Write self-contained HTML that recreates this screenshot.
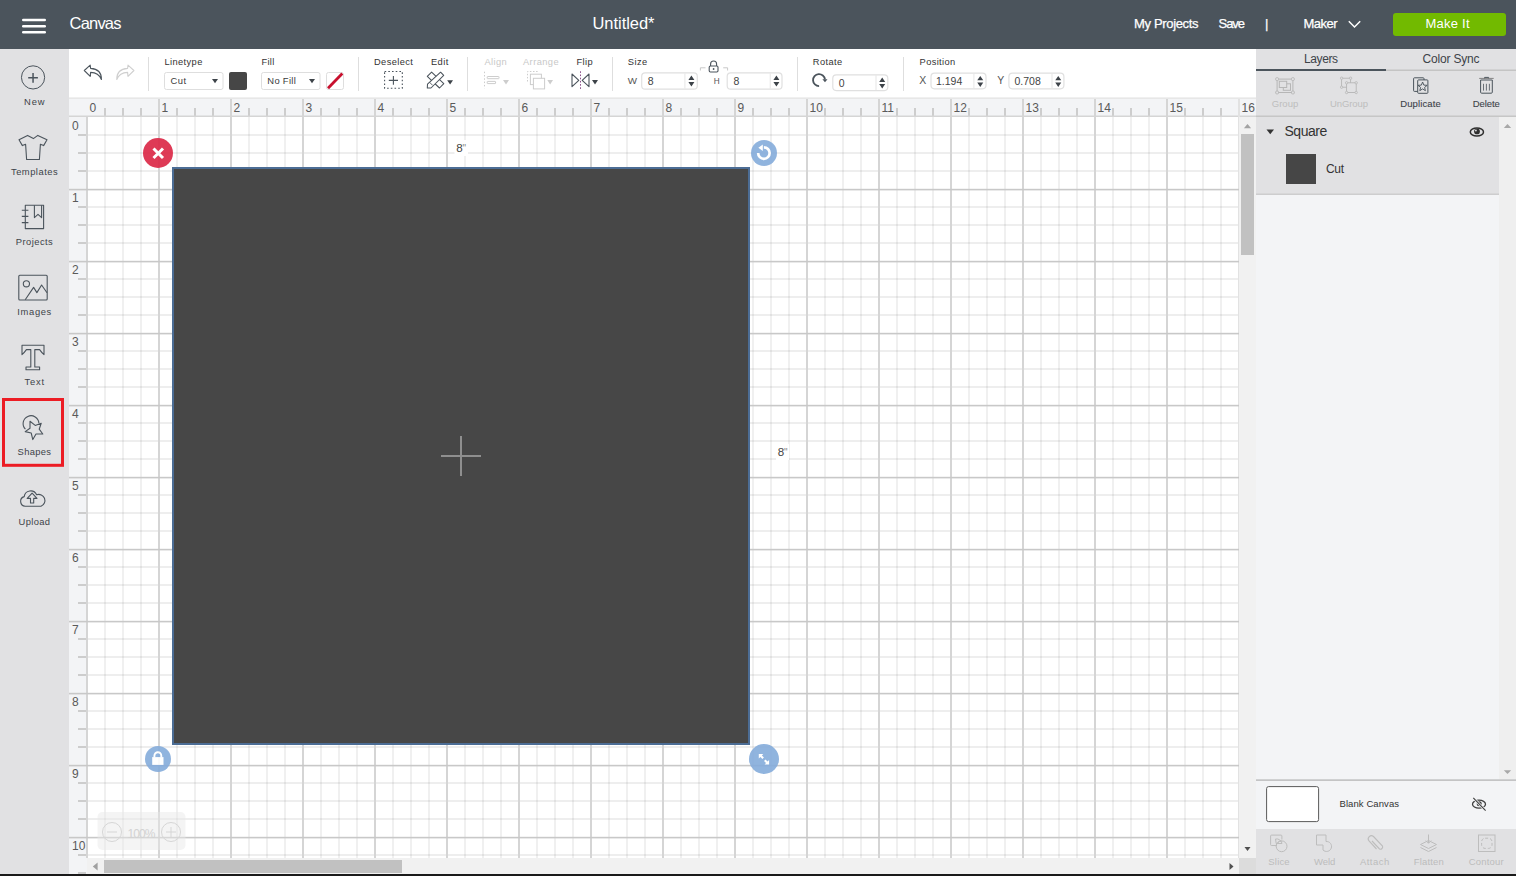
<!DOCTYPE html>
<html><head><meta charset="utf-8"><title>Cricut Design Space - Canvas</title>
<style>html,body{margin:0;padding:0;width:1516px;height:876px;overflow:hidden;background:#1a1a1a}svg{display:block}</style></head><body>
<svg width="1516" height="876" viewBox="0 0 1516 876" style="font-family:&quot;Liberation Sans&quot;,sans-serif">
<rect x="0" y="0" width="1516" height="876" fill="#1a1a1a"/>
<rect x="69" y="98" width="1187" height="776" fill="#ffffff"/>
<rect x="69" y="98" width="1187" height="19" fill="#f3f4f6"/>
<rect x="69" y="117" width="18" height="757" fill="#f3f4f6"/>
<rect x="104" y="117" width="2" height="741" fill="#000" fill-opacity="0.06"/>
<rect x="122" y="117" width="2" height="741" fill="#000" fill-opacity="0.06"/>
<rect x="140" y="117" width="2" height="741" fill="#000" fill-opacity="0.06"/>
<rect x="176" y="117" width="2" height="741" fill="#000" fill-opacity="0.06"/>
<rect x="194" y="117" width="2" height="741" fill="#000" fill-opacity="0.06"/>
<rect x="212" y="117" width="2" height="741" fill="#000" fill-opacity="0.06"/>
<rect x="248" y="117" width="2" height="741" fill="#000" fill-opacity="0.06"/>
<rect x="266" y="117" width="2" height="741" fill="#000" fill-opacity="0.06"/>
<rect x="284" y="117" width="2" height="741" fill="#000" fill-opacity="0.06"/>
<rect x="320" y="117" width="2" height="741" fill="#000" fill-opacity="0.06"/>
<rect x="338" y="117" width="2" height="741" fill="#000" fill-opacity="0.06"/>
<rect x="356" y="117" width="2" height="741" fill="#000" fill-opacity="0.06"/>
<rect x="392" y="117" width="2" height="741" fill="#000" fill-opacity="0.06"/>
<rect x="410" y="117" width="2" height="741" fill="#000" fill-opacity="0.06"/>
<rect x="428" y="117" width="2" height="741" fill="#000" fill-opacity="0.06"/>
<rect x="464" y="117" width="2" height="741" fill="#000" fill-opacity="0.06"/>
<rect x="482" y="117" width="2" height="741" fill="#000" fill-opacity="0.06"/>
<rect x="500" y="117" width="2" height="741" fill="#000" fill-opacity="0.06"/>
<rect x="536" y="117" width="2" height="741" fill="#000" fill-opacity="0.06"/>
<rect x="554" y="117" width="2" height="741" fill="#000" fill-opacity="0.06"/>
<rect x="572" y="117" width="2" height="741" fill="#000" fill-opacity="0.06"/>
<rect x="608" y="117" width="2" height="741" fill="#000" fill-opacity="0.06"/>
<rect x="626" y="117" width="2" height="741" fill="#000" fill-opacity="0.06"/>
<rect x="644" y="117" width="2" height="741" fill="#000" fill-opacity="0.06"/>
<rect x="680" y="117" width="2" height="741" fill="#000" fill-opacity="0.06"/>
<rect x="698" y="117" width="2" height="741" fill="#000" fill-opacity="0.06"/>
<rect x="716" y="117" width="2" height="741" fill="#000" fill-opacity="0.06"/>
<rect x="752" y="117" width="2" height="741" fill="#000" fill-opacity="0.06"/>
<rect x="770" y="117" width="2" height="741" fill="#000" fill-opacity="0.06"/>
<rect x="788" y="117" width="2" height="741" fill="#000" fill-opacity="0.06"/>
<rect x="824" y="117" width="2" height="741" fill="#000" fill-opacity="0.06"/>
<rect x="842" y="117" width="2" height="741" fill="#000" fill-opacity="0.06"/>
<rect x="860" y="117" width="2" height="741" fill="#000" fill-opacity="0.06"/>
<rect x="896" y="117" width="2" height="741" fill="#000" fill-opacity="0.06"/>
<rect x="914" y="117" width="2" height="741" fill="#000" fill-opacity="0.06"/>
<rect x="932" y="117" width="2" height="741" fill="#000" fill-opacity="0.06"/>
<rect x="968" y="117" width="2" height="741" fill="#000" fill-opacity="0.06"/>
<rect x="986" y="117" width="2" height="741" fill="#000" fill-opacity="0.06"/>
<rect x="1004" y="117" width="2" height="741" fill="#000" fill-opacity="0.06"/>
<rect x="1040" y="117" width="2" height="741" fill="#000" fill-opacity="0.06"/>
<rect x="1058" y="117" width="2" height="741" fill="#000" fill-opacity="0.06"/>
<rect x="1076" y="117" width="2" height="741" fill="#000" fill-opacity="0.06"/>
<rect x="1112" y="117" width="2" height="741" fill="#000" fill-opacity="0.06"/>
<rect x="1130" y="117" width="2" height="741" fill="#000" fill-opacity="0.06"/>
<rect x="1148" y="117" width="2" height="741" fill="#000" fill-opacity="0.06"/>
<rect x="1184" y="117" width="2" height="741" fill="#000" fill-opacity="0.06"/>
<rect x="1202" y="117" width="2" height="741" fill="#000" fill-opacity="0.06"/>
<rect x="1220" y="117" width="2" height="741" fill="#000" fill-opacity="0.06"/>
<rect x="87" y="134" width="1152" height="2" fill="#000" fill-opacity="0.065"/>
<rect x="87" y="152" width="1152" height="2" fill="#000" fill-opacity="0.065"/>
<rect x="87" y="170" width="1152" height="2" fill="#000" fill-opacity="0.065"/>
<rect x="87" y="206" width="1152" height="2" fill="#000" fill-opacity="0.065"/>
<rect x="87" y="224" width="1152" height="2" fill="#000" fill-opacity="0.065"/>
<rect x="87" y="242" width="1152" height="2" fill="#000" fill-opacity="0.065"/>
<rect x="87" y="278" width="1152" height="2" fill="#000" fill-opacity="0.065"/>
<rect x="87" y="296" width="1152" height="2" fill="#000" fill-opacity="0.065"/>
<rect x="87" y="314" width="1152" height="2" fill="#000" fill-opacity="0.065"/>
<rect x="87" y="350" width="1152" height="2" fill="#000" fill-opacity="0.065"/>
<rect x="87" y="368" width="1152" height="2" fill="#000" fill-opacity="0.065"/>
<rect x="87" y="386" width="1152" height="2" fill="#000" fill-opacity="0.065"/>
<rect x="87" y="422" width="1152" height="2" fill="#000" fill-opacity="0.065"/>
<rect x="87" y="440" width="1152" height="2" fill="#000" fill-opacity="0.065"/>
<rect x="87" y="458" width="1152" height="2" fill="#000" fill-opacity="0.065"/>
<rect x="87" y="494" width="1152" height="2" fill="#000" fill-opacity="0.065"/>
<rect x="87" y="512" width="1152" height="2" fill="#000" fill-opacity="0.065"/>
<rect x="87" y="530" width="1152" height="2" fill="#000" fill-opacity="0.065"/>
<rect x="87" y="566" width="1152" height="2" fill="#000" fill-opacity="0.065"/>
<rect x="87" y="584" width="1152" height="2" fill="#000" fill-opacity="0.065"/>
<rect x="87" y="602" width="1152" height="2" fill="#000" fill-opacity="0.065"/>
<rect x="87" y="638" width="1152" height="2" fill="#000" fill-opacity="0.065"/>
<rect x="87" y="656" width="1152" height="2" fill="#000" fill-opacity="0.065"/>
<rect x="87" y="674" width="1152" height="2" fill="#000" fill-opacity="0.065"/>
<rect x="87" y="710" width="1152" height="2" fill="#000" fill-opacity="0.065"/>
<rect x="87" y="728" width="1152" height="2" fill="#000" fill-opacity="0.065"/>
<rect x="87" y="746" width="1152" height="2" fill="#000" fill-opacity="0.065"/>
<rect x="87" y="782" width="1152" height="2" fill="#000" fill-opacity="0.065"/>
<rect x="87" y="800" width="1152" height="2" fill="#000" fill-opacity="0.065"/>
<rect x="87" y="818" width="1152" height="2" fill="#000" fill-opacity="0.065"/>
<rect x="87" y="854" width="1152" height="2" fill="#000" fill-opacity="0.065"/>
<rect x="104" y="108" width="2" height="8" fill="#cdcdcd"/>
<rect x="122" y="108" width="2" height="8" fill="#cdcdcd"/>
<rect x="140" y="108" width="2" height="8" fill="#cdcdcd"/>
<rect x="176" y="108" width="2" height="8" fill="#cdcdcd"/>
<rect x="194" y="108" width="2" height="8" fill="#cdcdcd"/>
<rect x="212" y="108" width="2" height="8" fill="#cdcdcd"/>
<rect x="248" y="108" width="2" height="8" fill="#cdcdcd"/>
<rect x="266" y="108" width="2" height="8" fill="#cdcdcd"/>
<rect x="284" y="108" width="2" height="8" fill="#cdcdcd"/>
<rect x="320" y="108" width="2" height="8" fill="#cdcdcd"/>
<rect x="338" y="108" width="2" height="8" fill="#cdcdcd"/>
<rect x="356" y="108" width="2" height="8" fill="#cdcdcd"/>
<rect x="392" y="108" width="2" height="8" fill="#cdcdcd"/>
<rect x="410" y="108" width="2" height="8" fill="#cdcdcd"/>
<rect x="428" y="108" width="2" height="8" fill="#cdcdcd"/>
<rect x="464" y="108" width="2" height="8" fill="#cdcdcd"/>
<rect x="482" y="108" width="2" height="8" fill="#cdcdcd"/>
<rect x="500" y="108" width="2" height="8" fill="#cdcdcd"/>
<rect x="536" y="108" width="2" height="8" fill="#cdcdcd"/>
<rect x="554" y="108" width="2" height="8" fill="#cdcdcd"/>
<rect x="572" y="108" width="2" height="8" fill="#cdcdcd"/>
<rect x="608" y="108" width="2" height="8" fill="#cdcdcd"/>
<rect x="626" y="108" width="2" height="8" fill="#cdcdcd"/>
<rect x="644" y="108" width="2" height="8" fill="#cdcdcd"/>
<rect x="680" y="108" width="2" height="8" fill="#cdcdcd"/>
<rect x="698" y="108" width="2" height="8" fill="#cdcdcd"/>
<rect x="716" y="108" width="2" height="8" fill="#cdcdcd"/>
<rect x="752" y="108" width="2" height="8" fill="#cdcdcd"/>
<rect x="770" y="108" width="2" height="8" fill="#cdcdcd"/>
<rect x="788" y="108" width="2" height="8" fill="#cdcdcd"/>
<rect x="824" y="108" width="2" height="8" fill="#cdcdcd"/>
<rect x="842" y="108" width="2" height="8" fill="#cdcdcd"/>
<rect x="860" y="108" width="2" height="8" fill="#cdcdcd"/>
<rect x="896" y="108" width="2" height="8" fill="#cdcdcd"/>
<rect x="914" y="108" width="2" height="8" fill="#cdcdcd"/>
<rect x="932" y="108" width="2" height="8" fill="#cdcdcd"/>
<rect x="968" y="108" width="2" height="8" fill="#cdcdcd"/>
<rect x="986" y="108" width="2" height="8" fill="#cdcdcd"/>
<rect x="1004" y="108" width="2" height="8" fill="#cdcdcd"/>
<rect x="1040" y="108" width="2" height="8" fill="#cdcdcd"/>
<rect x="1058" y="108" width="2" height="8" fill="#cdcdcd"/>
<rect x="1076" y="108" width="2" height="8" fill="#cdcdcd"/>
<rect x="1112" y="108" width="2" height="8" fill="#cdcdcd"/>
<rect x="1130" y="108" width="2" height="8" fill="#cdcdcd"/>
<rect x="1148" y="108" width="2" height="8" fill="#cdcdcd"/>
<rect x="1184" y="108" width="2" height="8" fill="#cdcdcd"/>
<rect x="1202" y="108" width="2" height="8" fill="#cdcdcd"/>
<rect x="1220" y="108" width="2" height="8" fill="#cdcdcd"/>
<rect x="78" y="134" width="8" height="2" fill="#cdcdcd"/>
<rect x="78" y="152" width="8" height="2" fill="#cdcdcd"/>
<rect x="78" y="170" width="8" height="2" fill="#cdcdcd"/>
<rect x="78" y="206" width="8" height="2" fill="#cdcdcd"/>
<rect x="78" y="224" width="8" height="2" fill="#cdcdcd"/>
<rect x="78" y="242" width="8" height="2" fill="#cdcdcd"/>
<rect x="78" y="278" width="8" height="2" fill="#cdcdcd"/>
<rect x="78" y="296" width="8" height="2" fill="#cdcdcd"/>
<rect x="78" y="314" width="8" height="2" fill="#cdcdcd"/>
<rect x="78" y="350" width="8" height="2" fill="#cdcdcd"/>
<rect x="78" y="368" width="8" height="2" fill="#cdcdcd"/>
<rect x="78" y="386" width="8" height="2" fill="#cdcdcd"/>
<rect x="78" y="422" width="8" height="2" fill="#cdcdcd"/>
<rect x="78" y="440" width="8" height="2" fill="#cdcdcd"/>
<rect x="78" y="458" width="8" height="2" fill="#cdcdcd"/>
<rect x="78" y="494" width="8" height="2" fill="#cdcdcd"/>
<rect x="78" y="512" width="8" height="2" fill="#cdcdcd"/>
<rect x="78" y="530" width="8" height="2" fill="#cdcdcd"/>
<rect x="78" y="566" width="8" height="2" fill="#cdcdcd"/>
<rect x="78" y="584" width="8" height="2" fill="#cdcdcd"/>
<rect x="78" y="602" width="8" height="2" fill="#cdcdcd"/>
<rect x="78" y="638" width="8" height="2" fill="#cdcdcd"/>
<rect x="78" y="656" width="8" height="2" fill="#cdcdcd"/>
<rect x="78" y="674" width="8" height="2" fill="#cdcdcd"/>
<rect x="78" y="710" width="8" height="2" fill="#cdcdcd"/>
<rect x="78" y="728" width="8" height="2" fill="#cdcdcd"/>
<rect x="78" y="746" width="8" height="2" fill="#cdcdcd"/>
<rect x="78" y="782" width="8" height="2" fill="#cdcdcd"/>
<rect x="78" y="800" width="8" height="2" fill="#cdcdcd"/>
<rect x="78" y="818" width="8" height="2" fill="#cdcdcd"/>
<rect x="78" y="854" width="8" height="2" fill="#cdcdcd"/>
<rect x="78" y="872" width="8" height="2" fill="#cdcdcd"/>
<rect x="69" y="115.5" width="1187" height="1.5" fill="#d5d5d5"/>
<rect x="86" y="117" width="2" height="741" fill="#d5d5d5"/>
<rect x="158" y="99" width="2" height="759" fill="#d5d5d5"/>
<rect x="230" y="99" width="2" height="759" fill="#d5d5d5"/>
<rect x="302" y="99" width="2" height="759" fill="#d5d5d5"/>
<rect x="374" y="99" width="2" height="759" fill="#d5d5d5"/>
<rect x="446" y="99" width="2" height="759" fill="#d5d5d5"/>
<rect x="518" y="99" width="2" height="759" fill="#d5d5d5"/>
<rect x="590" y="99" width="2" height="759" fill="#d5d5d5"/>
<rect x="662" y="99" width="2" height="759" fill="#d5d5d5"/>
<rect x="734" y="99" width="2" height="759" fill="#d5d5d5"/>
<rect x="806" y="99" width="2" height="759" fill="#d5d5d5"/>
<rect x="878" y="99" width="2" height="759" fill="#d5d5d5"/>
<rect x="950" y="99" width="2" height="759" fill="#d5d5d5"/>
<rect x="1022" y="99" width="2" height="759" fill="#d5d5d5"/>
<rect x="1094" y="99" width="2" height="759" fill="#d5d5d5"/>
<rect x="1166" y="99" width="2" height="759" fill="#d5d5d5"/>
<rect x="1238" y="99" width="2" height="759" fill="#e2e2e2"/>
<rect x="69" y="188.8" width="1170" height="1.6" fill="#c8c8c8"/>
<rect x="69" y="260.8" width="1170" height="1.6" fill="#c8c8c8"/>
<rect x="69" y="332.8" width="1170" height="1.6" fill="#c8c8c8"/>
<rect x="69" y="404.8" width="1170" height="1.6" fill="#c8c8c8"/>
<rect x="69" y="476.8" width="1170" height="1.6" fill="#c8c8c8"/>
<rect x="69" y="548.8" width="1170" height="1.6" fill="#c8c8c8"/>
<rect x="69" y="620.8" width="1170" height="1.6" fill="#c8c8c8"/>
<rect x="69" y="692.8" width="1170" height="1.6" fill="#c8c8c8"/>
<rect x="69" y="764.8" width="1170" height="1.6" fill="#c8c8c8"/>
<rect x="69" y="836.8" width="1170" height="1.6" fill="#c8c8c8"/>
<text x="89.5" y="112" font-size="12" fill="#5a5a5a" text-anchor="start" >0</text>
<text x="161.5" y="112" font-size="12" fill="#5a5a5a" text-anchor="start" >1</text>
<text x="233.5" y="112" font-size="12" fill="#5a5a5a" text-anchor="start" >2</text>
<text x="305.5" y="112" font-size="12" fill="#5a5a5a" text-anchor="start" >3</text>
<text x="377.5" y="112" font-size="12" fill="#5a5a5a" text-anchor="start" >4</text>
<text x="449.5" y="112" font-size="12" fill="#5a5a5a" text-anchor="start" >5</text>
<text x="521.5" y="112" font-size="12" fill="#5a5a5a" text-anchor="start" >6</text>
<text x="593.5" y="112" font-size="12" fill="#5a5a5a" text-anchor="start" >7</text>
<text x="665.5" y="112" font-size="12" fill="#5a5a5a" text-anchor="start" >8</text>
<text x="737.5" y="112" font-size="12" fill="#5a5a5a" text-anchor="start" >9</text>
<text x="809.5" y="112" font-size="12" fill="#5a5a5a" text-anchor="start" >10</text>
<text x="881.5" y="112" font-size="12" fill="#5a5a5a" text-anchor="start" >11</text>
<text x="953.5" y="112" font-size="12" fill="#5a5a5a" text-anchor="start" >12</text>
<text x="1025.5" y="112" font-size="12" fill="#5a5a5a" text-anchor="start" >13</text>
<text x="1097.5" y="112" font-size="12" fill="#5a5a5a" text-anchor="start" >14</text>
<text x="1169.5" y="112" font-size="12" fill="#5a5a5a" text-anchor="start" >15</text>
<text x="1241.5" y="112" font-size="12" fill="#5a5a5a" text-anchor="start" >16</text>
<text x="72" y="129.8" font-size="12" fill="#5a5a5a" text-anchor="start" >0</text>
<text x="72" y="201.8" font-size="12" fill="#5a5a5a" text-anchor="start" >1</text>
<text x="72" y="273.8" font-size="12" fill="#5a5a5a" text-anchor="start" >2</text>
<text x="72" y="345.8" font-size="12" fill="#5a5a5a" text-anchor="start" >3</text>
<text x="72" y="417.8" font-size="12" fill="#5a5a5a" text-anchor="start" >4</text>
<text x="72" y="489.8" font-size="12" fill="#5a5a5a" text-anchor="start" >5</text>
<text x="72" y="561.8" font-size="12" fill="#5a5a5a" text-anchor="start" >6</text>
<text x="72" y="633.8" font-size="12" fill="#5a5a5a" text-anchor="start" >7</text>
<text x="72" y="705.8" font-size="12" fill="#5a5a5a" text-anchor="start" >8</text>
<text x="72" y="777.8" font-size="12" fill="#5a5a5a" text-anchor="start" >9</text>
<text x="72" y="849.8" font-size="12" fill="#5a5a5a" text-anchor="start" >10</text>
<rect x="1239" y="117" width="17" height="741" fill="#f1f1f1"/>
<rect x="1241" y="134" width="13" height="121" fill="#c1c1c1"/>
<path d="M1243.9 128.2 L1247.5 124 L1251.1 128.2Z" fill="#a3a3a3"/>
<path d="M1244.5 847 L1247.5 851 L1250.5 847Z" fill="#505050"/>
<rect x="87" y="858" width="1152" height="16" fill="#f1f1f1"/>
<rect x="104" y="860" width="298" height="13" fill="#c1c1c1"/>
<path d="M97.6 862.6 L92.8 866.5 L97.6 870.4Z" fill="#a0a0a0"/>
<path d="M1229.5 863 L1233.5 866.5 L1229.5 870Z" fill="#505050"/>
<rect x="1239" y="858" width="17" height="16" fill="#dcdcdc"/>
<rect x="172" y="167" width="578" height="578" fill="#4c6d95"/>
<rect x="174" y="169" width="574" height="574" fill="#474747"/>
<rect x="460" y="436" width="2" height="40" fill="#8f8f8f"/>
<rect x="441" y="455" width="40" height="2" fill="#8f8f8f"/>
<rect x="454.5" y="140" width="13.5" height="16" fill="#fff"/>
<text x="456.2" y="152" font-size="11.6" fill="#444" text-anchor="start" >8</text>
<text x="462.6" y="152" font-size="10" fill="#888" text-anchor="start" >"</text>
<rect x="776" y="444" width="13" height="16" fill="#fff"/>
<text x="777.7" y="456" font-size="11.6" fill="#444" text-anchor="start" >8</text>
<text x="784.1" y="456" font-size="10" fill="#888" text-anchor="start" >"</text>
<g opacity="0.92">
<circle cx="158" cy="153" r="15" fill="#dc2a48"/>
<path d="M153.5 148.5 L163 158 M163 148.5 L153.5 158" stroke="#fff" stroke-width="3"/>
</g>
<g opacity="0.9">
<circle cx="764" cy="153" r="13" fill="#85acdb"/>
<path d="M758.15 153.05 A5.75 5.75 0 1 0 763.9 147.3" fill="none" stroke="#fff" stroke-width="2.7"/>
<path d="M762.8 144.6 L762.8 151 L758.4 147.8 Z" fill="#fff"/>
<circle cx="158" cy="759" r="13" fill="#85acdb"/>
<path d="M154.4 757.5 V755.7 A3.45 3.45 0 0 1 161.3 755.7 V757.5" fill="none" stroke="#fff" stroke-width="1.9"/>
<rect x="152.2" y="757.1" width="11.3" height="7.8" fill="#fff"/>
<circle cx="764" cy="759" r="15" fill="#85acdb"/>
<path d="M758.8 754 L763.3 754 L761.9 755.4 L763.9 757.4 L762.4 758.9 L760.4 756.9 L758.8 758.5 Z" fill="#fff"/>
<path d="M769.1 764.5 L764.6 764.5 L766 763.1 L764 761.1 L765.5 759.6 L767.5 761.6 L769.1 760 Z" fill="#fff"/>
</g>
<rect x="97.5" y="812" width="88" height="38" rx="5" fill="#e6e6e6" fill-opacity="0.45"/>
<circle cx="112" cy="832" r="9.5" fill="none" stroke="#d6d6d6" stroke-width="1"/>
<rect x="107" y="831.5" width="10" height="1" fill="#d6d6d6"/>
<circle cx="171" cy="832" r="9.5" fill="none" stroke="#d6d6d6" stroke-width="1"/>
<rect x="166" y="831.5" width="10" height="1" fill="#d6d6d6"/>
<rect x="170.5" y="827" width="1" height="10" fill="#d6d6d6"/>
<text x="127.5" y="837.5" font-size="12" fill="#d2d2d2" text-anchor="start" textLength="28" lengthAdjust="spacing" >100%</text>
<rect x="0" y="0" width="1516" height="49" fill="#4b545c"/>
<rect x="22" y="18.7" width="24" height="2.6" rx="1.3" fill="#fff"/>
<rect x="22" y="24.9" width="24" height="2.6" rx="1.3" fill="#fff"/>
<rect x="22" y="31.0" width="24" height="2.6" rx="1.3" fill="#fff"/>
<text x="69.5" y="28.75" font-size="16.5" fill="#fff" text-anchor="start" textLength="52" lengthAdjust="spacing" >Canvas</text>
<text x="592.5" y="29" font-size="16.5" fill="#fff" text-anchor="start" textLength="62" lengthAdjust="spacing" >Untitled*</text>
<text x="1134" y="28" font-size="13" fill="#fff" text-anchor="start" textLength="64.5" lengthAdjust="spacing" stroke="#fff" stroke-width="0.25">My Projects</text>
<text x="1218.5" y="28" font-size="13" fill="#fff" text-anchor="start" textLength="26.5" lengthAdjust="spacing" stroke="#fff" stroke-width="0.25">Save</text>
<text x="1265" y="28" font-size="13" fill="#fff" text-anchor="start" stroke="#fff" stroke-width="0.25">|</text>
<text x="1303.5" y="28" font-size="13" fill="#fff" text-anchor="start" textLength="34" lengthAdjust="spacing" stroke="#fff" stroke-width="0.25">Maker</text>
<path d="M1348.8 21.2 L1354.5 27 L1360.2 21.2" fill="none" stroke="#fff" stroke-width="1.5"/>
<rect x="1393" y="13" width="113" height="23" rx="3" fill="#72ba00"/>
<text x="1425.5" y="28" font-size="13" fill="#fff" text-anchor="start" textLength="44" lengthAdjust="spacing" >Make It</text>
<rect x="0" y="49" width="69" height="825" fill="#e1e1e3"/>
<circle cx="33.05" cy="77.4" r="11.6" fill="none" stroke="#4b545c" stroke-width="1"/>
<path d="M28.2 77.8 H37.9 M33.05 73 V82.7" fill="none" stroke="#4b545c" stroke-width="1.5"/>
<text x="34.3" y="105" font-size="9.4" fill="#3d4349" text-anchor="middle" textLength="20.6" lengthAdjust="spacing" >New</text>
<path d="M27.6 135.4 L33.4 138.6 L37.8 135.4 L47 139.8 L43.6 145.6 L40.4 144.2 L39.4 159.5 L26.6 159.5 L25.6 144.2 L22.4 145.6 L19 139.8 Z" fill="none" stroke="#4b545c" stroke-width="1.1" stroke-linejoin="round"/>
<text x="34.3" y="174.6" font-size="9.4" fill="#3d4349" text-anchor="middle" textLength="46.6" lengthAdjust="spacing" >Templates</text>
<rect x="25.3" y="205.2" width="18.3" height="23.4" fill="none" stroke="#4b545c" stroke-width="1.1" stroke-linejoin="round"/>
<path d="M21.8 210.2 H28.4 M21.8 216.4 H28.4 M21.8 222.6 H28.4" fill="none" stroke="#4b545c" stroke-width="1.1"/>
<path d="M34.4 205.2 V217.6 L38 214.4 L41.6 217.6 V205.2" fill="none" stroke="#4b545c" stroke-width="1.1" stroke-linejoin="round"/>
<text x="34.3" y="244.6" font-size="9.4" fill="#3d4349" text-anchor="middle" textLength="37" lengthAdjust="spacing" >Projects</text>
<rect x="18.8" y="275.2" width="28.4" height="24.8" rx="1" fill="none" stroke="#4b545c" stroke-width="1.1" stroke-linejoin="round"/>
<circle cx="26.4" cy="283.8" r="3.1" fill="none" stroke="#4b545c" stroke-width="1.1" stroke-linejoin="round"/>
<path d="M25.2 299.8 L33.6 287.4 L36.9 292.6 L41.6 285 L47 292.8" fill="none" stroke="#4b545c" stroke-width="1.1" stroke-linejoin="round"/>
<text x="34.3" y="314.6" font-size="9.4" fill="#3d4349" text-anchor="middle" textLength="34" lengthAdjust="spacing" >Images</text>
<path d="M22 345.2 H44 V354.6 Q42 353 39.6 349.6 H34.8 V367 H39.6 V369.8 H26 V367 H30.8 V349.6 H26.4 Q24 353 22 354.6 Z" fill="none" stroke="#4b545c" stroke-width="1.1" stroke-linejoin="round"/>
<text x="34.3" y="384.6" font-size="9.4" fill="#3d4349" text-anchor="middle" textLength="19.5" lengthAdjust="spacing" >Text</text>
<rect x="3.5" y="399.5" width="59" height="65.8" fill="none" stroke="#ec1c24" stroke-width="3"/>
<path d="M25.4 429.2 A7.9 7.9 0 1 1 38.9 423.3" fill="none" stroke="#4b545c" stroke-width="1.1" stroke-linejoin="round"/>
<path d="M30 421.3 L35.2 425.4 L41.2 423.3 L39.2 429.2 L42.8 434 L36 434 L32.8 439.6 L31.2 433 L25.2 431.6 L30 428.2 Z" fill="none" stroke="#4b545c" stroke-width="1.1" stroke-linejoin="round"/>
<text x="34.3" y="454.9" font-size="9.4" fill="#3d4349" text-anchor="middle" textLength="33.4" lengthAdjust="spacing" >Shapes</text>
<path d="M25.2 506.2 A4.9 4.9 0 0 1 24.2 496.6 A6.5 6.5 0 0 1 36.6 494.8 A5.6 5.6 0 0 1 41 506.2 Z" fill="none" stroke="#4b545c" stroke-width="1.1" stroke-linejoin="round"/>
<path d="M32.1 493.2 L37 498.4 H33.7 V503 H30.5 V498.4 H27.2 Z" fill="none" stroke="#4b545c" stroke-width="1.1" stroke-linejoin="round"/>
<text x="34.3" y="524.6" font-size="9.4" fill="#3d4349" text-anchor="middle" textLength="31.5" lengthAdjust="spacing" >Upload</text>
<rect x="69" y="49" width="1187" height="49" fill="#ffffff"/>
<rect x="69" y="97.5" width="1187" height="1.2" fill="#e2e2e2"/>
<rect x="148" y="57" width="1" height="34" fill="#dedede"/>
<rect x="358" y="57" width="1" height="34" fill="#dedede"/>
<rect x="467" y="57" width="1" height="34" fill="#dedede"/>
<rect x="612" y="57" width="1" height="34" fill="#dedede"/>
<rect x="797" y="57" width="1" height="34" fill="#dedede"/>
<rect x="903" y="57" width="1" height="34" fill="#dedede"/>
<path d="M84.3 70.5 L90.2 65.2 L90.6 68.4 C96.5 68.8 101.6 72 101.4 79.5 C99.8 75.5 96 72.6 90.6 72.4 L90.2 76.4 Z" fill="none" stroke="#4b545c" stroke-width="1.1" stroke-linejoin="round"/>
<path d="M84.3 70.5 L90.2 65.2 L90.6 68.4 C96.5 68.8 101.6 72 101.4 79.5 C99.8 75.5 96 72.6 90.6 72.4 L90.2 76.4 Z" transform="translate(218.2 0) scale(-1 1)" fill="none" stroke="#cfcfcf" stroke-width="1.1" stroke-linejoin="round"/>
<text x="164.5" y="65" font-size="9.3" fill="#333" text-anchor="start" textLength="37.81" lengthAdjust="spacing" >Linetype</text>
<text x="261.5" y="65" font-size="9.3" fill="#333" text-anchor="start" textLength="12.77" lengthAdjust="spacing" >Fill</text>
<rect x="164.5" y="72.5" width="58.5" height="17" rx="2" fill="#fff" stroke="#dedede" stroke-width="1"/>
<text x="170.5" y="84.2" font-size="9.4" fill="#3a3a3a" text-anchor="start" textLength="15.56" lengthAdjust="spacing" >Cut</text>
<path d="M212 79 H218 L215 83.2 Z" fill="#3d4349"/>
<rect x="229" y="72" width="18" height="18" rx="2" fill="#464646"/>
<rect x="261.5" y="72.5" width="58.5" height="17" rx="2" fill="#fff" stroke="#dedede" stroke-width="1"/>
<text x="267.3" y="84.2" font-size="9.4" fill="#3a3a3a" text-anchor="start" textLength="28.5" lengthAdjust="spacing" >No Fill</text>
<path d="M309 79 H315 L312 83.2 Z" fill="#3d4349"/>
<rect x="326.5" y="72.5" width="17" height="17" rx="2" fill="#fff" stroke="#dedede" stroke-width="1"/>
<path d="M328 88.3 L342.3 73.5" stroke="#c8102e" stroke-width="2.8"/>
<text x="374" y="65" font-size="9.3" fill="#333" text-anchor="start" textLength="38.91" lengthAdjust="spacing" >Deselect</text>
<text x="431" y="65" font-size="9.3" fill="#333" text-anchor="start" textLength="17.23" lengthAdjust="spacing" >Edit</text>
<rect x="384.6" y="71.5" width="17.7" height="16.8" fill="none" stroke="#4b545c" stroke-width="1.1" stroke-dasharray="1.6 2.1"/>
<path d="M388.8 80.4 H398 M393.4 76 V84.8" stroke="#4b545c" stroke-width="1.1"/>
<path d="M431.6 72.1 L427.3 76.4 L439.5 88 L443.8 83.7 Z" fill="#fff" stroke="#4b545c" stroke-width="1.05" stroke-linejoin="round"/>
<path d="M440.6 72.2 L443.7 75.3 L431 88 L427.3 88 L427.5 84.2 Z" fill="#fff" stroke="#4b545c" stroke-width="1.05" stroke-linejoin="round"/>
<path d="M429.5 82.2 L432.6 85.3" stroke="#4b545c" stroke-width="0.9"/>
<path d="M447.2 80.2 H453 L450.1 84.4 Z" fill="#3d4349"/>
<text x="484.5" y="65" font-size="9.3" fill="#c8c8c8" text-anchor="start" textLength="22.24" lengthAdjust="spacing" >Align</text>
<text x="523" y="65" font-size="9.3" fill="#c8c8c8" text-anchor="start" textLength="35.58" lengthAdjust="spacing" >Arrange</text>
<text x="576.5" y="65" font-size="9.3" fill="#333" text-anchor="start" textLength="16.11" lengthAdjust="spacing" >Flip</text>
<path d="M484.5 71.7 V88.4" stroke="#cdcdcd" stroke-width="1" stroke-dasharray="1.5 1.8"/>
<rect x="487.2" y="76.5" width="11.8" height="2.2" rx="0.5" fill="none" stroke="#cdcdcd" stroke-width="1"/>
<rect x="487.2" y="81.4" width="8.4" height="2.2" rx="0.5" fill="none" stroke="#cdcdcd" stroke-width="1"/>
<path d="M503 80 H509 L506 84.6 Z" fill="#cdcdcd"/>
<path d="M527.5 81.5 V71.5 H538" fill="none" stroke="#cdcdcd" stroke-width="1" stroke-dasharray="1.5 1.6"/>
<rect x="530.4" y="74.2" width="11" height="10.4" fill="#fff" stroke="#cdcdcd" stroke-width="1"/>
<rect x="533.4" y="78.3" width="11.2" height="10.6" fill="#fff" stroke="#cdcdcd" stroke-width="1"/>
<path d="M547.3 80 H553 L550.1 84.6 Z" fill="#cdcdcd"/>
<path d="M572 74 L578.8 80.3 L572 86.7 Z M589 74 L582.2 80.3 L589 86.7 Z" fill="none" stroke="#4b545c" stroke-width="1.1" stroke-linejoin="round"/>
<path d="M580.5 71.3 V89" stroke="#8a4f8a" stroke-width="1" stroke-dasharray="1.6 1.6"/>
<path d="M592 80 H598 L595 84.6 Z" fill="#3d4349"/>
<text x="627.8" y="65.1" font-size="9.3" fill="#333" text-anchor="start" textLength="19.45" lengthAdjust="spacing" >Size</text>
<text x="627.8" y="84" font-size="9.8" fill="#555" text-anchor="start" textLength="8.8" lengthAdjust="spacing" >W</text>
<rect x="641.7" y="72.8" width="55.6" height="16.4" rx="3.5" fill="#fff" stroke="#e0e0e0" stroke-width="1.2"/>
<rect x="684.4" y="73.3" width="1" height="15.399999999999999" fill="#e6e6e6"/>
<path d="M688.4 79.89999999999999 L691.4 75.6 L694.4 79.89999999999999 Z M688.4 82.1 L691.4 86.5 L694.4 82.1 Z" fill="#3d4349"/>
<text x="647.8" y="85" font-size="10.5" fill="#444" text-anchor="start" >8</text>
<text x="713.8" y="84" font-size="8.2" fill="#555" text-anchor="start" >H</text>
<rect x="727.2" y="72.8" width="54.8" height="16.4" rx="3.5" fill="#fff" stroke="#e0e0e0" stroke-width="1.2"/>
<rect x="769.7" y="73.3" width="1" height="15.399999999999999" fill="#e6e6e6"/>
<path d="M773.4 79.89999999999999 L776.4 75.6 L779.4 79.89999999999999 Z M773.4 82.1 L776.4 86.5 L779.4 82.1 Z" fill="#3d4349"/>
<text x="733.5" y="85" font-size="10.5" fill="#444" text-anchor="start" >8</text>
<path d="M700.4 70.5 V67.8 H705.5 M723.2 67.8 H727.6 V70.5" fill="none" stroke="#c8c8c8" stroke-width="1"/>
<path d="M710.6 66 V64 A3 3 0 0 1 716.6 64 V66" fill="none" stroke="#4b545c" stroke-width="1.1"/>
<rect x="709.2" y="66" width="8.8" height="6" rx="1.2" fill="#fff" stroke="#4b545c" stroke-width="1.1"/>
<circle cx="713.6" cy="69" r="0.9" fill="#4b545c"/>
<text x="812.8" y="65.1" font-size="9.3" fill="#333" text-anchor="start" textLength="29.46" lengthAdjust="spacing" >Rotate</text>
<path d="M819.1 86.1 A6 6 0 1 1 825 79.4" fill="none" stroke="#4b545c" stroke-width="1.8"/>
<path d="M822.4 79.3 L827.5 79.3 L825 82.2 Z" fill="#4b545c"/>
<rect x="832.8" y="74.8" width="55" height="15.8" rx="3.5" fill="#fff" stroke="#e0e0e0" stroke-width="1.2"/>
<rect x="875.5" y="75.3" width="1" height="14.8" fill="#e6e6e6"/>
<path d="M879.1999999999999 81.89999999999999 L882.1999999999999 77.6 L885.1999999999999 81.89999999999999 Z M879.1999999999999 84.1 L882.1999999999999 88.5 L885.1999999999999 84.1 Z" fill="#3d4349"/>
<text x="838.8" y="86.5" font-size="10.5" fill="#444" text-anchor="start" >0</text>
<text x="919.6" y="65.1" font-size="9.3" fill="#333" text-anchor="start" textLength="35.58" lengthAdjust="spacing" >Position</text>
<text x="919.3" y="84" font-size="10.5" fill="#555" text-anchor="start" >X</text>
<rect x="931.0" y="73.2" width="55" height="15.600000000000001" rx="3.5" fill="#fff" stroke="#e0e0e0" stroke-width="1.2"/>
<rect x="973.4" y="73.7" width="1" height="14.600000000000001" fill="#e6e6e6"/>
<path d="M977.25 80.3 L980.25 76.0 L983.25 80.3 Z M977.25 82.5 L980.25 86.9 L983.25 82.5 Z" fill="#3d4349"/>
<text x="936" y="85" font-size="10.5" fill="#444" text-anchor="start" >1.194</text>
<text x="997.2" y="84" font-size="10.5" fill="#555" text-anchor="start" >Y</text>
<rect x="1008.9" y="73.2" width="55" height="15.600000000000001" rx="3.5" fill="#fff" stroke="#e0e0e0" stroke-width="1.2"/>
<rect x="1051.5" y="73.7" width="1" height="14.600000000000001" fill="#e6e6e6"/>
<path d="M1055.25 80.3 L1058.25 76.0 L1061.25 80.3 Z M1055.25 82.5 L1058.25 86.9 L1061.25 82.5 Z" fill="#3d4349"/>
<text x="1014.5" y="85" font-size="10.5" fill="#444" text-anchor="start" >0.708</text>
<rect x="1256" y="49" width="260" height="825" fill="#f3f4f6"/>
<rect x="1256" y="49" width="260" height="67" fill="#e1e1e3"/>
<rect x="1256" y="69" width="130" height="2" fill="#4b545c"/>
<rect x="1386" y="69.5" width="130" height="1.5" fill="#c4c4c4"/>
<text x="1321" y="63" font-size="12" fill="#3d4349" text-anchor="middle" textLength="34" lengthAdjust="spacing" >Layers</text>
<text x="1451" y="63" font-size="12" fill="#3d4349" text-anchor="middle" textLength="57" lengthAdjust="spacing" >Color Sync</text>
<rect x="1256" y="115.5" width="260" height="1.5" fill="#c6c6c6"/>
<text x="1285" y="106.9" font-size="9.5" fill="#bdbdbd" text-anchor="middle" textLength="26.5" lengthAdjust="spacing" >Group</text>
<text x="1349" y="106.9" font-size="9.5" fill="#bdbdbd" text-anchor="middle" textLength="38" lengthAdjust="spacing" >UnGroup</text>
<text x="1420.5" y="106.9" font-size="9.5" fill="#3d4349" text-anchor="middle" textLength="40.7" lengthAdjust="spacing" stroke="#3d4349" stroke-width="0.1">Duplicate</text>
<text x="1486.3" y="106.9" font-size="9.5" fill="#3d4349" text-anchor="middle" textLength="27.2" lengthAdjust="spacing" stroke="#3d4349" stroke-width="0.1">Delete</text>
<rect x="1277.1" y="79.1" width="15.8" height="13.4" fill="none" stroke="#b6b6b6" stroke-width="1"/>
<rect x="1275.6999999999998" y="77.69999999999999" width="2.8" height="2.8" rx="0.9" fill="#e1e1e3" stroke="#b6b6b6" stroke-width="0.9"/>
<rect x="1291.5" y="77.69999999999999" width="2.8" height="2.8" rx="0.9" fill="#e1e1e3" stroke="#b6b6b6" stroke-width="0.9"/>
<rect x="1275.6999999999998" y="91.1" width="2.8" height="2.8" rx="0.9" fill="#e1e1e3" stroke="#b6b6b6" stroke-width="0.9"/>
<rect x="1291.5" y="91.1" width="2.8" height="2.8" rx="0.9" fill="#e1e1e3" stroke="#b6b6b6" stroke-width="0.9"/>
<rect x="1283.3" y="83.8" width="7.2" height="6.5" fill="none" stroke="#b6b6b6" stroke-width="1"/>
<rect x="1279.3" y="81.3" width="7.4" height="6.2" fill="#e1e1e3" stroke="#b6b6b6" stroke-width="1"/>
<rect x="1341.6" y="78.2" width="9" height="9" fill="none" stroke="#b6b6b6" stroke-width="0.9"/>
<rect x="1346.6" y="82.8" width="9.6" height="9.7" fill="#e1e1e3" stroke="#b6b6b6" stroke-width="0.9"/>
<circle cx="1341.6" cy="78.2" r="1.2" fill="#e1e1e3" stroke="#b6b6b6" stroke-width="0.8"/>
<circle cx="1350.6" cy="78.2" r="1.2" fill="#e1e1e3" stroke="#b6b6b6" stroke-width="0.8"/>
<circle cx="1341.6" cy="87.2" r="1.2" fill="#e1e1e3" stroke="#b6b6b6" stroke-width="0.8"/>
<circle cx="1346.6" cy="82.8" r="1.2" fill="#e1e1e3" stroke="#b6b6b6" stroke-width="0.8"/>
<circle cx="1356.2" cy="82.8" r="1.2" fill="#e1e1e3" stroke="#b6b6b6" stroke-width="0.8"/>
<circle cx="1346.6" cy="92.5" r="1.2" fill="#e1e1e3" stroke="#b6b6b6" stroke-width="0.8"/>
<circle cx="1356.2" cy="92.5" r="1.2" fill="#e1e1e3" stroke="#b6b6b6" stroke-width="0.8"/>
<rect x="1413.6" y="77.8" width="10.4" height="13.6" rx="0.8" fill="none" stroke="#4b545c" stroke-width="1"/>
<rect x="1417.7" y="79.9" width="10.2" height="13.4" rx="0.8" fill="#e1e1e3" stroke="#4b545c" stroke-width="1"/>
<path d="M1422.60 82.00 L1423.83 85.10 L1427.17 85.32 L1424.60 87.45 L1425.42 90.68 L1422.60 88.90 L1419.78 90.68 L1420.60 87.45 L1418.03 85.32 L1421.37 85.10 Z" fill="none" stroke="#4b545c" stroke-width="0.95" stroke-linejoin="round"/>
<path d="M1479.2 78.4 H1493.7" stroke="#777" stroke-width="0.9"/>
<path d="M1484.6 78.3 V77.4 H1488.6 V78.3" fill="none" stroke="#4b545c" stroke-width="1"/>
<path d="M1480.6 80 V92.2 Q1480.6 93.2 1481.6 93.2 H1491.3 Q1492.3 93.2 1492.3 92.2 V80 Z" fill="none" stroke="#4b545c" stroke-width="1"/>
<path d="M1483.5 83.8 V90.6 M1486.4 83.8 V90.6 M1489.4 83.8 V90.6" stroke="#4b545c" stroke-width="0.8"/>
<rect x="1256" y="117" width="243" height="76.5" fill="#e1e1e3"/>
<rect x="1256" y="193.5" width="243" height="1.3" fill="#c4c4c4"/>
<rect x="1499" y="117" width="17" height="662" fill="#efefef"/>
<path d="M1503.8 128 L1507.5 124 L1511.2 128Z" fill="#a8a8a8"/>
<path d="M1503.8 770.2 L1507.5 774 L1511.2 770.2Z" fill="#a8a8a8"/>
<path d="M1266.5 129.6 H1274 L1270.25 134.2 Z" fill="#333"/>
<text x="1284.4" y="136" font-size="14" fill="#333" text-anchor="start" textLength="43" lengthAdjust="spacing" >Square</text>
<ellipse cx="1476.9" cy="132" rx="6.6" ry="4.1" fill="none" stroke="#2f2f2f" stroke-width="1.5"/>
<circle cx="1477" cy="131.4" r="2.9" fill="#2f2f2f"/>
<circle cx="1475.9" cy="130.5" r="0.9" fill="#e1e1e3"/>
<rect x="1286" y="154" width="30" height="30" fill="#464646"/>
<text x="1326" y="173" font-size="12" fill="#333" text-anchor="start" textLength="18" lengthAdjust="spacing" >Cut</text>
<rect x="1256" y="779.4" width="260" height="1.4" fill="#b9b9b9"/>
<rect x="1266.6" y="786.6" width="52" height="35" rx="2" fill="#fff" stroke="#5a5a5a" stroke-width="1"/>
<text x="1339.5" y="807.2" font-size="9.5" fill="#333" text-anchor="start" textLength="59.5" lengthAdjust="spacing" >Blank Canvas</text>
<ellipse cx="1479" cy="804.2" rx="6.5" ry="4" fill="none" stroke="#3f3f3f" stroke-width="1.3"/>
<circle cx="1479.2" cy="803.8" r="2.5" fill="#3f3f3f"/>
<path d="M1473.3 797.9 L1485.6 810.7" stroke="#f3f4f6" stroke-width="2.6"/>
<path d="M1473.3 797.9 L1485.6 810.7" stroke="#3f3f3f" stroke-width="1.1"/>
<rect x="1256" y="829" width="260" height="45" fill="#e1e1e3"/>
<text x="1279" y="865.3" font-size="9.5" fill="#bcbcbc" text-anchor="middle" textLength="21.3" lengthAdjust="spacing" >Slice</text>
<text x="1324.6" y="865.3" font-size="9.5" fill="#bcbcbc" text-anchor="middle" textLength="21.2" lengthAdjust="spacing" >Weld</text>
<text x="1374.6" y="865.3" font-size="9.5" fill="#bcbcbc" text-anchor="middle" textLength="29.3" lengthAdjust="spacing" >Attach</text>
<text x="1428.7" y="865.3" font-size="9.5" fill="#bcbcbc" text-anchor="middle" textLength="30" lengthAdjust="spacing" >Flatten</text>
<text x="1486.2" y="865.3" font-size="9.5" fill="#bcbcbc" text-anchor="middle" textLength="35" lengthAdjust="spacing" >Contour</text>
<path d="M1276 845.5 H1271.5 Q1270.6 845.5 1270.6 844.6 V836 Q1270.6 835.1 1271.5 835.1 H1281 Q1281.9 835.1 1281.9 836 V839.5" fill="none" stroke="#bdbdbd" stroke-width="1"/>
<circle cx="1281.6" cy="846.3" r="5.4" fill="none" stroke="#bdbdbd" stroke-width="1"/>
<path d="M1276.2 846.3 A5.4 5.4 0 0 1 1281.6 840.9" fill="none" stroke="#bdbdbd" stroke-width="1"/>
<path d="M1275.5 839 A5.5 5.5 0 0 1 1282 843.5 H1276.2 Z" fill="none" stroke="#bdbdbd" stroke-width="1"/>
<path d="M1316.5 835 H1326 V841.5 A5 5 0 1 1 1323 850 V845 H1316.5 Z" fill="none" stroke="#bdbdbd" stroke-width="1"/>
<path d="M1372 841 L1379.5 849 A2.3 2.3 0 0 0 1382.5 846 L1373.5 836.5 A3.2 3.2 0 0 0 1369 841 L1376.5 849" fill="none" stroke="#bdbdbd" stroke-width="1.1"/>
<path d="M1428.5 834.5 V843 M1425.8 840.6 L1428.5 843.3 L1431.2 840.6" fill="none" stroke="#bdbdbd" stroke-width="1"/>
<path d="M1420.5 844.5 L1428.5 840.5 L1436.5 844.5 L1428.5 848.5 Z" fill="none" stroke="#bdbdbd" stroke-width="1"/>
<path d="M1420.5 847.5 L1428.5 851.5 L1436.5 847.5" fill="none" stroke="#bdbdbd" stroke-width="1"/>
<rect x="1478.5" y="835" width="16.5" height="16.5" fill="none" stroke="#bdbdbd" stroke-width="1"/>
<rect x="1481.6" y="838.2" width="10.4" height="10.2" rx="3.5" fill="none" stroke="#bdbdbd" stroke-width="1" stroke-dasharray="3 2"/>
<rect x="0" y="874" width="1516" height="2" fill="#1a1a1a"/>
</svg></body></html>
